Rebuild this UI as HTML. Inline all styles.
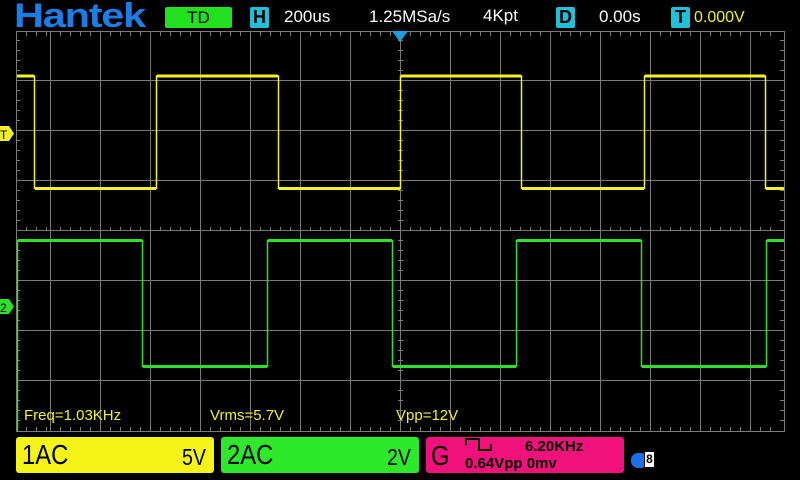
<!DOCTYPE html>
<html><head><meta charset="utf-8"><style>
body{margin:0;width:800px;height:480px;background:#000;overflow:hidden;position:relative;font-family:"Liberation Sans",sans-serif}
.t{position:absolute;white-space:nowrap}
.ic{position:absolute;background:#1fc0d8;color:#000;font-weight:bold;text-align:center;border-radius:2px}
.box{position:absolute;top:437px;height:36px;border-radius:3px}
</style></head><body>
<div class="t" style="left:14px;top:-3px;font-size:34px;font-weight:bold;color:#1a7ee6;letter-spacing:-1px;transform:scaleX(1.22);transform-origin:left">Hantek</div>
<div class="t" style="left:165px;top:7px;width:67px;height:21px;background:#22e01e;color:#000;font-size:17px;text-align:center;line-height:21px;border-radius:2px">TD</div>
<div class="ic" style="left:250px;top:7px;width:19px;height:21px;font-size:18px;line-height:21px">H</div>
<div class="t" style="left:284px;top:7px;color:#fff;font-size:17px">200us</div>
<div class="t" style="left:369px;top:7px;color:#fff;font-size:17px">1.25MSa/s</div>
<div class="t" style="left:483px;top:6px;color:#fff;font-size:17px">4Kpt</div>
<div class="ic" style="left:556px;top:7px;width:19px;height:21px;font-size:18px;line-height:21px">D</div>
<div class="t" style="left:599px;top:7px;color:#fff;font-size:17px">0.00s</div>
<div class="ic" style="left:671px;top:7px;width:19px;height:21px;font-size:18px;line-height:21px">T</div>
<div class="t" style="left:694px;top:9px;color:#f0f020;font-size:16px">0.000V</div>
<svg width="800" height="480" style="position:absolute;left:0;top:0">
<g stroke="#7a7a7a" stroke-width="1" fill="none">
<rect x="16.5" y="31.5" width="768" height="400"/>
<path d="M50.5 32V431M100.5 32V431M150.5 32V431M200.5 32V431M250.5 32V431M300.5 32V431M350.5 32V431M400.5 32V431M450.5 32V431M500.5 32V431M550.5 32V431M600.5 32V431M650.5 32V431M700.5 32V431M750.5 32V431"/>
<path d="M16 80.5H784M16 130.5H784M16 180.5H784M16 230.5H784M16 280.5H784M16 330.5H784M16 380.5H784"/>
</g>
<g id="tk" stroke="#7a7a7a" stroke-width="1">
<path d="M26.5 32v4M36.5 32v4M46.5 32v4M60.5 32v4M70.5 32v4M80.5 32v4M90.5 32v4M110.5 32v4M120.5 32v4M130.5 32v4M140.5 32v4M160.5 32v4M170.5 32v4M180.5 32v4M190.5 32v4M210.5 32v4M220.5 32v4M230.5 32v4M240.5 32v4M260.5 32v4M270.5 32v4M280.5 32v4M290.5 32v4M310.5 32v4M320.5 32v4M330.5 32v4M340.5 32v4M360.5 32v4M370.5 32v4M380.5 32v4M390.5 32v4M410.5 32v4M420.5 32v4M430.5 32v4M440.5 32v4M460.5 32v4M470.5 32v4M480.5 32v4M490.5 32v4M510.5 32v4M520.5 32v4M530.5 32v4M540.5 32v4M560.5 32v4M570.5 32v4M580.5 32v4M590.5 32v4M610.5 32v4M620.5 32v4M630.5 32v4M640.5 32v4M660.5 32v4M670.5 32v4M680.5 32v4M690.5 32v4M710.5 32v4M720.5 32v4M730.5 32v4M740.5 32v4M760.5 32v4M770.5 32v4"/>
</g>
<use href="#tk" transform="translate(0,195)"/>
<use href="#tk" transform="translate(0,395)"/>
<g stroke="#7a7a7a" stroke-width="1">
<path d="M16 40.5h4M16 50.5h4M16 60.5h4M16 70.5h4M16 90.5h4M16 100.5h4M16 110.5h4M16 120.5h4M16 140.5h4M16 150.5h4M16 160.5h4M16 170.5h4M16 190.5h4M16 200.5h4M16 210.5h4M16 220.5h4M16 240.5h4M16 250.5h4M16 260.5h4M16 270.5h4M16 290.5h4M16 300.5h4M16 310.5h4M16 320.5h4M16 340.5h4M16 350.5h4M16 360.5h4M16 370.5h4M16 390.5h4M16 400.5h4M16 410.5h4M16 420.5h4"/>
<path d="M780 40.5h4M780 50.5h4M780 60.5h4M780 70.5h4M780 90.5h4M780 100.5h4M780 110.5h4M780 120.5h4M780 140.5h4M780 150.5h4M780 160.5h4M780 170.5h4M780 190.5h4M780 200.5h4M780 210.5h4M780 220.5h4M780 240.5h4M780 250.5h4M780 260.5h4M780 270.5h4M780 290.5h4M780 300.5h4M780 310.5h4M780 320.5h4M780 340.5h4M780 350.5h4M780 360.5h4M780 370.5h4M780 390.5h4M780 400.5h4M780 410.5h4M780 420.5h4"/>
<path d="M398 40.5h5M398 50.5h5M398 60.5h5M398 70.5h5M398 90.5h5M398 100.5h5M398 110.5h5M398 120.5h5M398 140.5h5M398 150.5h5M398 160.5h5M398 170.5h5M398 190.5h5M398 200.5h5M398 210.5h5M398 220.5h5M398 240.5h5M398 250.5h5M398 260.5h5M398 270.5h5M398 290.5h5M398 300.5h5M398 310.5h5M398 320.5h5M398 340.5h5M398 350.5h5M398 360.5h5M398 370.5h5M398 390.5h5M398 400.5h5M398 410.5h5M398 420.5h5"/>
</g>
<path d="M17 76H34.5V188.5H156.5V76H278.5V188.5H400.5V76H521.5V188.5H644.5V76H765.5V188.5H784" fill="none" stroke="#f2f226" stroke-width="1.5"/>
<path d="M17 76H34M157 76H278M401 76H521M645 76H765M35 188.5H156M279 188.5H400M522 188.5H644M766 188.5H784" stroke="#f2f226" stroke-width="3"/>
<path d="M17.5 431V240.5H142.5V366.5H267.5V240.5H392.5V366.5H516.5V240.5H641.5V366.5H766.5V240.5H784" fill="none" stroke="#2ee02a" stroke-width="1.5"/>
<path d="M18 240.5H142M268 240.5H392M517 240.5H641M767 240.5H784M143 366.5H267M393 366.5H516M642 366.5H766" stroke="#2ee02a" stroke-width="3"/>
<path d="M392 31H408L400 42Z" fill="#1e9ee0"/>
<path d="M0 126H9L14 133.5L9 141H0Z" fill="#f2f226"/>
<text x="0" y="139" font-size="12" font-family="Liberation Sans" fill="#000">T</text>
<path d="M0 299H9L14 306.5L9 314H0Z" fill="#2ee02a"/>
<text x="0" y="312" font-size="12" font-family="Liberation Sans" fill="#000">2</text>
</svg>
<div class="t" style="left:24px;top:407px;color:#f2f226;font-size:15px">Freq=1.03KHz</div>
<div class="t" style="left:210px;top:407px;color:#f2f226;font-size:15px">Vrms=5.7V</div>
<div class="t" style="left:396px;top:407px;color:#f2f226;font-size:15px">Vpp=12V</div>
<div class="box" style="left:16px;width:198px;background:#f4f418"></div>
<div class="t" style="left:22px;top:439px;font-size:28px;color:#000;transform:scaleX(0.85);transform-origin:left">1AC</div>
<div class="t" style="left:182px;top:444px;font-size:23px;color:#000;transform:scaleX(0.85);transform-origin:left">5V</div>
<div class="box" style="left:221px;width:198px;background:#2ee82a"></div>
<div class="t" style="left:227px;top:439px;font-size:28px;color:#000;transform:scaleX(0.85);transform-origin:left">2AC</div>
<div class="t" style="left:387px;top:444px;font-size:23px;color:#000;transform:scaleX(0.85);transform-origin:left">2V</div>
<div class="box" style="left:426px;width:198px;background:#f0127a"></div>
<div class="t" style="left:431px;top:440px;font-size:28px;color:#000;transform:scaleX(0.85);transform-origin:left">G</div>
<svg width="40" height="16" style="position:absolute;left:465px;top:438px"><path d="M1 7V1H14V12H26V6" fill="none" stroke="#000" stroke-width="2"/></svg>
<div class="t" style="left:525px;top:438px;font-size:15px;font-weight:bold;color:#000">6.20KHz</div>
<div class="t" style="left:465px;top:455px;font-size:15px;font-weight:bold;color:#000">0.64Vpp 0mv</div>
<div style="position:absolute;left:631px;top:453px;width:13px;height:15px;background:#1e6ee8;border-radius:7px 2px 2px 7px"></div>
<div class="t" style="left:645px;top:452px;width:9px;height:15px;background:#fff;color:#000;font-size:12px;font-weight:bold;text-align:center;line-height:15px">8</div>
</body></html>
